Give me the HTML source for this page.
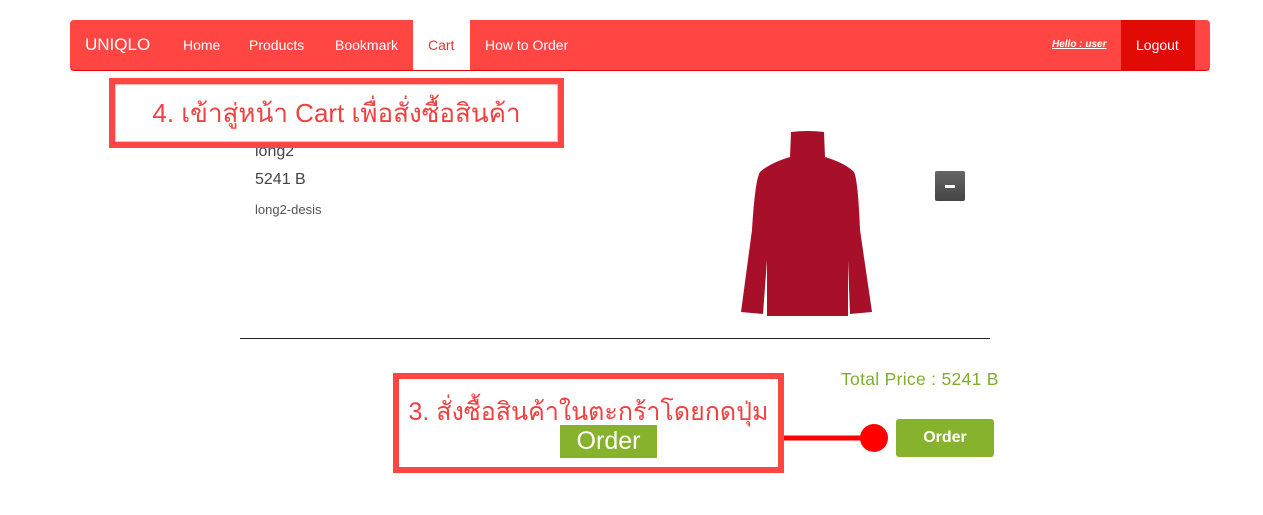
<!DOCTYPE html>
<html><head><meta charset="utf-8"><style>
*{margin:0;padding:0;box-sizing:border-box}
body{width:1263px;height:515px;background:#fff;position:relative;overflow:hidden;font-family:"Liberation Sans",Arial,sans-serif}
.a{position:absolute}
.nav{left:70px;top:20px;width:1140px;height:51px;background:#ff4643;border-radius:4px;border-bottom:1px solid #e00}
.nl{color:#fff;font-size:14px;top:37px}
.th{font-family:"Liberation Sans","Noto Sans CJK SC","WenQuanYi Zen Hei",sans-serif;color:#f04040}
</style></head><body>
<div class="a nav"></div>
<div class="a" style="left:413px;top:20px;width:57px;height:50px;background:#fff"></div>
<div class="a" style="left:1121px;top:20px;width:74px;height:50px;background:#e20a05"></div>
<div class="a nl" style="left:85px;top:35px;font-size:17px">UNIQLO</div>
<div class="a nl" style="left:183px">Home</div>
<div class="a nl" style="left:249px">Products</div>
<div class="a nl" style="left:335px">Bookmark</div>
<div class="a nl" style="left:428px;color:#f03030">Cart</div>
<div class="a nl" style="left:485px">How to Order</div>
<div class="a" style="left:1052px;top:39px;color:#fff;font-size:10px;font-style:italic;font-weight:bold;text-decoration:underline">Hello : user</div>
<div class="a nl" style="left:1136px">Logout</div>

<div class="a" style="left:255px;top:143px;font-size:16px;color:#444">long2</div>
<div class="a" style="left:255px;top:171px;font-size:16px;color:#444">5241 B</div>
<div class="a" style="left:255px;top:202px;font-size:13px;color:#555">long2-desis</div>

<svg class="a" style="left:0;top:0" width="1263" height="515">
<path d="M791 132 Q808 130 824 132 L825 157 Q845 163 854 172 Q858 180 860 230 L872 312 L850 314 L848 260 L848 316 L767 316 L767 260 L763 314 L741 312 L752 230 Q755 180 760 172 Q770 163 790 157 Z" fill="#a8102a"/>
<line x1="240" y1="338.5" x2="990" y2="338.5" stroke="#222" stroke-width="1"/>
<line x1="782" y1="438" x2="870" y2="438" stroke="#f00" stroke-width="5"/>
<ellipse cx="874" cy="438" rx="14" ry="14" fill="#f00"/>
</svg>
<div class="a" style="left:935px;top:171px;width:30px;height:30px;background:linear-gradient(#666,#444);border-radius:2px"><div class="a" style="left:10px;top:14px;width:10px;height:3px;background:#fff"></div></div>

<div class="a" style="left:109px;top:78px;width:455px;height:70px;border:6px solid #ff4643;background:#fff;outline:1px solid #fbb;outline-offset:-7px"></div>
<div class="a th" style="left:109px;top:93px;width:455px;text-align:center;font-size:26px">4. เข้าสู่หน้า Cart เพื่อสั่งซื้อสินค้า</div>

<div class="a" style="left:841px;top:369px;color:#7fae2c;font-size:17.5px;letter-spacing:0.3px">Total Price : 5241 B</div>
<div class="a" style="left:896px;top:419px;width:98px;height:38px;background:#86b22d;border-radius:3px;color:#fff;font-size:16px;font-weight:bold;text-align:center;line-height:38px">Order</div>

<div class="a" style="left:393px;top:373px;width:391px;height:100px;border:6px solid #ff4643;background:#fff"></div>
<div class="a th" style="left:393px;top:392px;width:391px;text-align:center;font-size:25px">3. สั่งซื้อสินค้าในตะกร้าโดยกดปุ่ม</div>
<div class="a" style="left:560px;top:425px;width:97px;height:33px;background:#86b22d;color:#fff;font-size:25px;text-align:center;line-height:33px">Order</div>
</body></html>
